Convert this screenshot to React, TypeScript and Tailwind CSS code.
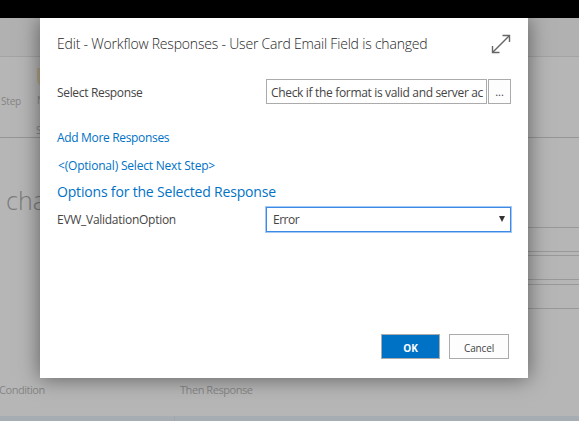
function PageBehind() {
  return (
    <div className="flex h-full flex-col bg-[#b6b6b6] text-[#858585]">
      <div className="h-[18px] shrink-0 bg-black" />
      <div className="h-[39px] shrink-0 border-b border-[#a3a3a3] bg-[#b1b1b1]" />
      <div className="flex h-[81px] shrink-0 border-b border-[#969696]">
        <div className="w-[36px] pt-[37px] pl-px text-[10px] leading-[14px] tracking-[-0.2px]">Step</div>
        <div className="flex w-[40px] flex-col">
          <div className="mt-[11px] ml-px h-[19px] w-[18px] rounded-b-md bg-[#b5a888]" />
          <div className="mt-[7px] ml-px text-[10px] leading-[14px]">N</div>
          <div className="mt-[16px] text-[10px] leading-[14px]">S</div>
        </div>
      </div>
      <div className="flex h-[244px] shrink-0 justify-between">
        <div className="pt-[44px] pl-[6px] text-[25px] leading-[36px] font-light text-[#7c7c7c]">cha</div>
        <div className="flex w-[100px] flex-col pt-[89px]">
          <div className="h-[25px] border-y border-[#999]" />
          <div className="mt-[3px] h-[25px] border-y border-[#999]" />
          <div className="mt-[4px] h-[25px] border-y border-[#999]" />
        </div>
      </div>
      <div className="flex h-[34px] shrink-0 text-[11px] leading-[16px] tracking-[-0.45px]">
        <div className="w-[180px] -indent-px">Condition</div>
        <div>Then Response</div>
      </div>
      <div className="flex h-[5px] shrink-0 bg-[#a6adb3]">
        <div className="w-[175px] border-r border-[#a0a6ab]" />
      </div>
    </div>
  );
}

function ExpandIcon() {
  return (
    <svg className="mt-[16px] h-[20px] w-[20px]" viewBox="0 0 20 20" fill="none" stroke="#666" strokeWidth="1.4">
      <path d="M1.5 18.5 18.5 1.5" />
      <path d="M11.5 1.5h7v6.5M1.5 12v6.5h7" />
    </svg>
  );
}

export default function App() {
  return (
    <div className="relative h-[421px] w-[579px] overflow-hidden font-['Open_Sans','Noto_Sans',sans-serif]">
      <PageBehind />
      <div className="absolute top-[18px] left-[40px] flex h-[360px] w-[488px] flex-col bg-white text-[12px] tracking-[-0.33px] whitespace-nowrap text-[#444] shadow-[0_0_20px_rgba(0,0,0,0.5)]">
        <div className="flex h-[61px] shrink-0 justify-between pr-[17px] pl-[17px]">
          <h1 className="pt-[16px] text-[14px] leading-[20px] font-light tracking-[-0.2px] text-[#262626]">
            Edit - Workflow Responses - User Card Email Field is changed
          </h1>
          <ExpandIcon />
        </div>
        <div className="flex h-[49px] shrink-0 pl-[17px]">
          <label className="w-[209px] pt-[5px] leading-[18px]">Select Response</label>
          <div className="h-[25px] w-[221px] overflow-hidden border border-[#ababab] pt-[4px] pl-[4px] leading-[18px]">
            Check if the format is valid and server ac
          </div>
          <button className="ml-px h-[25px] w-[23px] border border-[#ababab] bg-[#fdfdfd] pt-px text-[11px] leading-[22px] tracking-normal">...</button>
        </div>
        <div className="flex h-[78px] shrink-0 flex-col items-start pl-[17px] text-[#0072c6]">
          <a className="pt-px leading-[18px]">Add More Responses</a>
          <a className="mt-[10px] pl-px leading-[18px] tracking-[-0.2px]">&lt;(Optional) Select Next Step&gt;</a>
          <h2 className="mt-[7px] text-[14px] leading-[20px] tracking-[-0.18px]">Options for the Selected Response</h2>
        </div>
        <div className="flex shrink-0 pl-[17px]">
          <label className="w-[209px] pt-[5px] leading-[18px] tracking-[-0.28px]">EVW_ValidationOption</label>
          <div className="mt-px flex h-[25px] w-[245px] justify-between border border-[#3b8ae5] pt-[3px] pr-[5px] pl-[6px] leading-[18px] shadow-[0_0_0_1px_#a5c9f5]">
            <span className="tracking-[-0.5px]">Error</span>
            <svg className="mt-[5px] h-[6px] w-[6px]" viewBox="0 0 6 6">
              <path d="M0 0h6L3 6z" fill="#333" />
            </svg>
          </div>
        </div>
        <div className="mt-auto mr-[19px] mb-[19px] flex justify-end gap-[9px] text-[10px] tracking-[-0.15px]">
          <button className="h-[25px] w-[59px] border border-[#ababab] bg-[#0072c6] pt-[4px] leading-[19px] font-bold text-white">OK</button>
          <button className="h-[25px] w-[60px] border border-[#ababab] bg-[#fdfdfd] pt-[4px] leading-[19px]">Cancel</button>
        </div>
      </div>
    </div>
  );
}
